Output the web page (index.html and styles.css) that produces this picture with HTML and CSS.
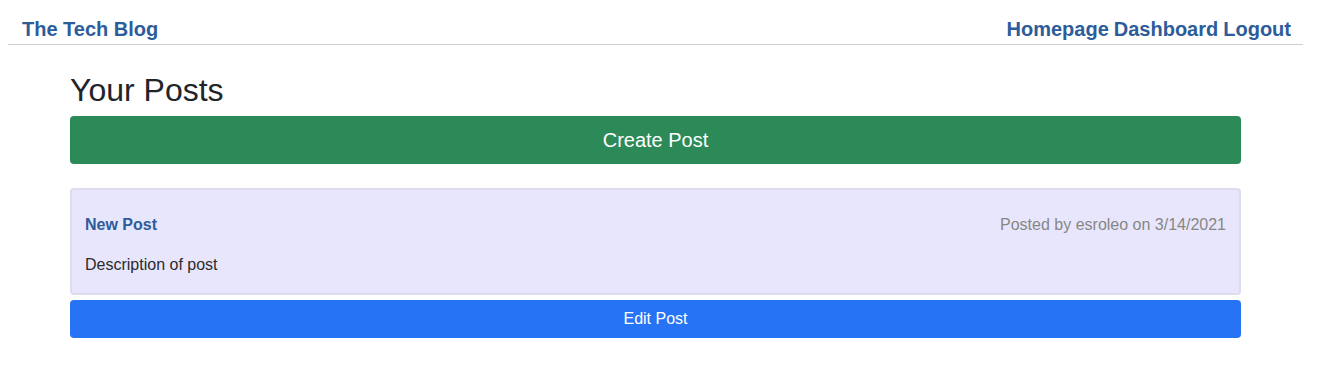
FILE: index.html
```html
<!DOCTYPE html>
<html lang="en">
<head>
    <meta charset="UTF-8">
    <meta name="viewport" content="width=device-width, initial-scale=1.0">
    <title>The Tech Blog - Dashboard</title>
    <link rel="stylesheet" href="styles.css">
</head>
<body>
    <div class="page">
        <header class="site-header">
            <a href="/" class="brand">The Tech Blog</a>
            <nav class="nav">
                <a href="/">Homepage</a>
                <a href="/dashboard">Dashboard</a>
                <a href="/logout">Logout</a>
            </nav>
        </header>

        <main class="container">
            <h2 class="page-title">Your Posts</h2>
            <a href="/dashboard/new" class="btn btn-create">Create Post</a>

            <div class="post">
                <div class="post-card">
                    <div class="post-head">
                        <a href="/post/1" class="post-title">New Post</a>
                        <span class="post-meta">Posted by esroleo on 3/14/2021</span>
                    </div>
                    <p class="post-body">Description of post</p>
                </div>
                <a href="/dashboard/edit/1" class="btn btn-edit">Edit Post</a>
            </div>
        </main>
    </div>
</body>
</html>
```

FILE: styles.css
```css
* {
    margin: 0;
    padding: 0;
    box-sizing: border-box;
    font-family: 'Liberation Sans', Arial, sans-serif;
}

body {
    background: white;
    color: #212529;
    padding: 8px;
}

.page {
    width: 1295px;
}

a {
    text-decoration: none;
}

.site-header {
    display: flex;
    justify-content: space-between;
    align-items: flex-end;
    padding: 9px 12px 3px 14px;
    border-bottom: 1px solid #cfcfcf;
    height: 37px;
}

.site-header a {
    color: #2d5c9b;
    font-weight: bold;
    font-size: 20px;
    line-height: 24px;
}

.nav {
    display: flex;
    gap: 5px;
}

.container {
    margin: 0 62px;
    padding-top: 26px;
}

.page-title {
    font-size: 32px;
    font-weight: 400;
    line-height: 38px;
    color: #212529;
    margin-bottom: 7px;
}

.btn {
    display: block;
    text-align: center;
    color: white;
    border-radius: 4px;
}

.btn-create {
    background: #2b8a57;
    font-size: 20px;
    height: 48px;
    line-height: 48px;
}

.post {
    margin-top: 24px;
}

.post-card {
    background: #e8e6fc;
    border: 2px solid #dddbf0;
    border-radius: 4px;
    padding: 25px 13px 18px;
}

.post-head {
    display: flex;
    justify-content: space-between;
    align-items: center;
    margin-bottom: 20px;
}

.post-title {
    color: #2d5c9b;
    font-weight: bold;
    font-size: 16px;
    line-height: 20px;
}

.post-meta {
    color: #868686;
    font-size: 16px;
    line-height: 20px;
}

.post-body {
    font-size: 16px;
    line-height: 20px;
    color: #2b2b2b;
}

.btn-edit {
    background: #2673f5;
    font-size: 16px;
    height: 38px;
    line-height: 38px;
    margin-top: 5px;
}
```
